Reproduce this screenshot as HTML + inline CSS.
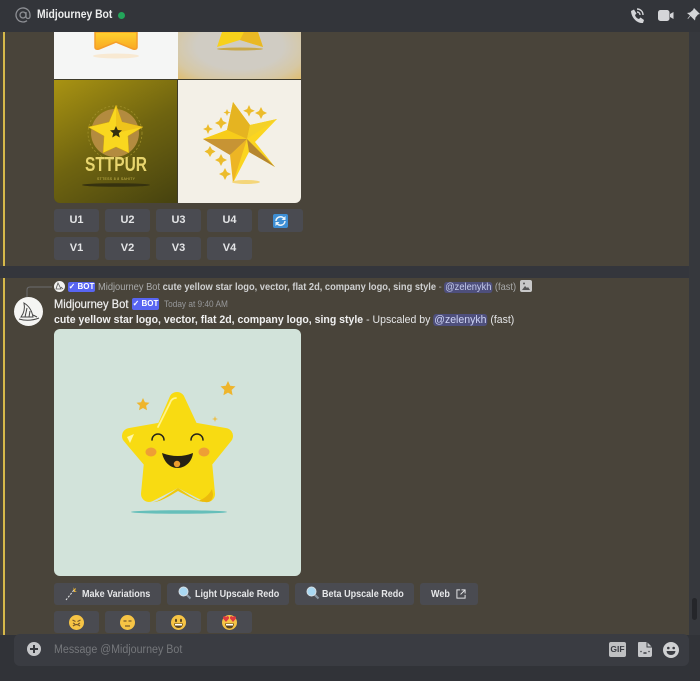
<!DOCTYPE html>
<html><head><meta charset="utf-8"><style>
html,body{margin:0;padding:0;background:#49443a}
#r{position:relative;width:700px;height:681px;overflow:hidden;background:#49443a;font-family:"Liberation Sans",sans-serif;color:#e6e7e9}
#r div,#r svg{position:absolute}
.b{background:#4a4b51;border-radius:3px;text-align:center;font-size:11px;font-weight:700;color:#e4e5e7;box-sizing:border-box;white-space:nowrap}
.u{width:45px;height:23px;line-height:23px}
.t{white-space:nowrap;transform-origin:0 50%}
.l{font-size:10.500px;font-weight:700;line-height:14px;color:#e6e7e9;top:587px;transform:scaleX(.86)}
.m{background:#4e4f7c;color:#cdd3f4;border-radius:3px;padding:0 1px}
</style></head><body><div id="r">
<div style="left:0;top:0;width:700px;height:32px;background:#33353a"></div>
<div style="left:689px;top:32px;width:11px;height:649px;background:#36383d"></div>
<div style="left:692px;top:598px;width:5px;height:22px;background:#25262a;border-radius:3px"></div>
<div style="left:0;top:266px;width:689px;height:12px;background:#34363c"></div>
<div style="left:3px;top:32px;width:2px;height:234px;background:#d6b94a"></div>
<div style="left:3px;top:278px;width:2px;height:357px;background:#d6b94a"></div>

<svg style="left:15px;top:7px" width="16" height="16" viewBox="0 0 16 16" fill="none" stroke="#8d8f94" stroke-width="1.300"><circle cx="8" cy="8" r="3"/><path d="M11 5v4.500a2 2 0 0 0 4 0V8a7 7 0 1 0-3 5.700"/></svg>
<div class="t" style="left:37px;top:8px;font-size:11.500px;font-weight:700;color:#eceded;line-height:15px;transform:scaleX(.9)">Midjourney Bot</div>
<div style="left:118px;top:12px;width:7px;height:7px;border-radius:50%;background:#23a55a"></div>

<svg style="left:629px;top:7px" width="17" height="18" viewBox="0 0 17 18"><path d="M2 4l3-1.500 2.500 4-1.500 1.500c.5 2 2 3.500 4 4l1.500-1.500 3.500 2.500-1 3c-6 .5-12-5.500-12-12.500z" fill="#d4d5d8"/><path d="M8 2c3.500 0 6 2.500 6 6M8 5c1.800 0 3 1.200 3 3" fill="none" stroke="#d4d5d8" stroke-width="1.400"/></svg>
<svg style="left:658px;top:9px" width="16" height="13" viewBox="0 0 16 13"><rect x="0" y="1" width="11.500" height="11" rx="2.500" fill="#d4d5d8"/><path d="M12 5l3.500-2v7L12 8z" fill="#d4d5d8"/></svg>
<svg style="left:687px;top:7px" width="13" height="16" viewBox="0 0 13 16"><path d="M7 1l6 6-2 .5-2.500 3-.5 3L3.500 9 1 12l-.5-.5L3 8.500 0 6l3-.5 3-2.500z" fill="#d4d5d8"/></svg>

<!-- image grid -->
<div style="left:54px;top:32px;width:247px;height:171px;border-radius:0 0 6px 6px;overflow:hidden;background:#3e3b2a">
<div style="left:0;top:0;width:124px;height:47px;background:#f5f6f5"></div>
<div style="left:124px;top:0;width:123px;height:47px;background:radial-gradient(ellipse at 50% 30%,#d0ccc3 50%,#d6c8a4 78%,#e3b95a 110%)"></div>
<div style="left:0;top:48px;width:123px;height:123px;background:linear-gradient(150deg,#a99312 0%,#6f6410 50%,#46420f 100%)"></div>
<div style="left:124px;top:48px;width:123px;height:123px;background:#f3f0e7"></div>
<svg style="left:0;top:0" width="247" height="171" viewBox="0 0 247 171">
<defs><linearGradient id="g" x1="0" x2="0" y1="0" y2="1"><stop offset="0" stop-color="#ffd22e"/><stop offset="1" stop-color="#f9a825"/></linearGradient></defs>
<path d="M41 0v15q0 3 4 2l17-7 17 7q4 1 4-2V0z" fill="url(#g)" stroke="#f59e2a" stroke-width="1.500"/>
<ellipse cx="62" cy="24" rx="23" ry="2.500" fill="#f8e9d2"/>
<path d="M168 0l-5 15 23-7 23 7-5-15z" fill="#f7d11b"/><path d="M186 8l23 7-5-15h-14z" fill="#e9b824"/>
<ellipse cx="186" cy="17" rx="23" ry="1.500" fill="#c9a94b"/>
<circle cx="61" cy="101" r="24" fill="#b38b3f"/>
<circle cx="61" cy="101" r="27" fill="none" stroke="#a0902a" stroke-width=".8" stroke-dasharray="2 2"/>
<path d="M62 73l6 17 21 5-15 9 1 17-13-6-13 6 1-17-16-9 21-5z" fill="#f9d71f" stroke="#c9a014" stroke-width=".5"/>
<path d="M62 73l6 17 21 5-27 6z" fill="#efc41b"/>
<path d="M62 94l1.800 4 4.200.4-3.200 2.800 1 4.300-3.800-2.200-3.800 2.200 1-4.300-3.200-2.800 4.200-.4z" fill="#33300f"/>
<text x="31" y="139" font-family="Liberation Sans" font-size="20" font-weight="700" fill="#e8d56e" textLength="62" lengthAdjust="spacingAndGlyphs">STTPUR</text>
<text x="43" y="148" font-family="Liberation Sans" font-size="3.500" fill="#cdbb50" textLength="38">STTESS 8 8 SAHITY</text>
<ellipse cx="62" cy="153" rx="34" ry="1.800" fill="#36320f"/>
<path d="M179 70l17 23 27-6-22 23 20 25-26-15-16 31-1-28-29-16 24-9z" fill="#fbd51f"/>
<path d="M179 70l17 23-3 14-20-9z" fill="#e5b421"/>
<path d="M149 107l24-9 20 9z" fill="#f7cc1a"/>
<path d="M149 107l44 0-17 16z" fill="#c79434"/>
<path d="M176 123l17-16-14 44z" fill="#edb524"/>
<path d="M193 107l28 28-26-15z" fill="#b68630"/>
<path d="M196 93l27-6-30 20z" fill="#f4d128"/>
<g fill="#ecbc2b">
<path d="M154 92l1.500 3.500 3.500 1.500-3.500 1.500-1.500 3.500-1.500-3.500-3.500-1.500 3.500-1.500z"/>
<path d="M167 85l2 4 4 2-4 2-2 4-2-4-4-2 4-2z"/>
<path d="M173 77l1 2.500 2.500 1-2.500 1-1 2.500-1-2.500-2.500-1 2.500-1z"/>
<path d="M195 73l1.800 4 4 1.800-4 1.800-1.800 4-1.800-4-4-1.800 4-1.800z"/>
<path d="M207 75l2 4 4 2-4 2-2 4-2-4-4-2 4-2z"/>
<path d="M156 114l2 3.500 3.500 2-3.500 2-2 3.500-2-3.500-3.500-2 3.500-2z"/>
<path d="M167 122l2 4 4 2-4 2-2 4-2-4-4-2 4-2z"/>
<path d="M171 136l2 4 4 2-4 2-2 4-2-4-4-2 4-2z"/>
</g>
<ellipse cx="192" cy="150" rx="14" ry="2" fill="#f4d67a"/>
</svg>
</div>

<div class="b u" style="left:54px;top:209px">U1</div><div class="b u" style="left:105px;top:209px">U2</div><div class="b u" style="left:156px;top:209px">U3</div><div class="b u" style="left:207px;top:209px">U4</div>
<div class="b u" style="left:258px;top:209px"></div>
<svg style="left:273px;top:214px" width="15" height="14" viewBox="0 0 15 14"><rect width="15" height="14" rx="2" fill="#3d8ed4"/><path d="M3 7a4.500 4.500 0 0 1 8-2.500M12 7a4.500 4.500 0 0 1-8 2.500" fill="none" stroke="#e8f1f8" stroke-width="1.500"/><path d="M12.500 2v4h-4zM2.500 12V8h4z" fill="#e8f1f8"/></svg>
<div class="b u" style="left:54px;top:237px">V1</div><div class="b u" style="left:105px;top:237px">V2</div><div class="b u" style="left:156px;top:237px">V3</div><div class="b u" style="left:207px;top:237px">V4</div>

<!-- reply -->
<svg style="left:26px;top:285px" width="28" height="14" viewBox="0 0 28 14" fill="none"><path d="M1 13V5q0-3 3-3h22" stroke="#6b6c6e" stroke-width="1"/></svg>
<div style="left:54px;top:281px;width:11px;height:11px;border-radius:50%;background:#f2f2f0"></div>
<svg style="left:55px;top:282px" width="9" height="9" viewBox="0 0 9 9"><path d="M3 1l3 6H1zM6 5l2 2" fill="none" stroke="#555" stroke-width=".8"/></svg>
<div class="t" style="left:68px;top:282px;width:27px;height:10px;background:#5865f2;border-radius:2px;font-size:8px;font-weight:700;line-height:10px;text-align:center;color:#fff">✓ BOT</div>
<div class="t" style="left:98px;top:280.500px;font-size:10.200px;line-height:13px;color:#a9aaab;transform:scaleX(.913)">Midjourney Bot <b style="color:#cfd0d1">cute yellow star logo, vector, flat 2d, company logo, sing style</b> - <span class="m" style="color:#c5cbec">@zelenykh</span> (fast)</div>
<svg style="left:520px;top:280px" width="12" height="12" viewBox="0 0 12 12"><rect width="12" height="12" rx="2" fill="#c8c8c8"/><path d="M2 10l3-4 2 2 1-1 2 3z" fill="#555"/><circle cx="4" cy="3.500" r="1" fill="#555"/></svg>

<!-- avatar -->
<div style="left:14px;top:297px;width:29px;height:29px;border-radius:50%;background:#f5f5f3"></div>
<svg style="left:17px;top:300px" width="24" height="23" viewBox="0 0 24 23" fill="none" stroke="#444" stroke-width="1"><path d="M7 3c5 3 8 8 9 14H4C7 13 8 8 7 3zM10 8l-2 9M13 11l-1 6M16 15l4 2M2 19q10 3 20-1"/></svg>

<div class="t" style="left:54px;top:296px;font-size:12px;line-height:16px;color:#f0f0f0;-webkit-text-stroke:.2px #f0f0f0;transform:scaleX(.93)">Midjourney Bot</div>
<div class="t" style="left:132px;top:298px;width:27px;height:12px;background:#5865f2;border-radius:2px;font-size:8px;font-weight:700;line-height:12px;text-align:center;color:#fff">✓ BOT</div>
<div class="t" style="left:164px;top:298px;font-size:8.800px;line-height:13px;color:#97989a;transform:scaleX(.94)">Today at 9:40 AM</div>
<div class="t" style="left:54px;top:312.500px;font-size:11.100px;line-height:15px;color:#e4e5e6;transform:scaleX(.948)"><b style="color:#f0f0f0">cute yellow star logo, vector, flat 2d, company logo, sing style</b> - Upscaled by <span class="m">@zelenykh</span> (fast)</div>

<!-- upscaled image -->
<div style="left:54px;top:329px;width:247px;height:247px;background:#d2e3da;border-radius:6px;overflow:hidden">
<svg style="left:0;top:0" width="247" height="247" viewBox="0 0 247 247">
<ellipse cx="125" cy="183" rx="48" ry="1.800" fill="#66bfba"/>
<path d="M174 52l2.200 4.800 5.300.6-3.900 3.600 1 5.200-4.600-2.600-4.600 2.600 1-5.200-3.900-3.600 5.300-.6z" fill="#eeb52c"/>
<path d="M89 69l1.900 4.200 4.600.5-3.400 3.100.9 4.500-4-2.300-4 2.300.9-4.500-3.400-3.100 4.600-.5z" fill="#eeb52c"/>
<path d="M161 87l.8 2.200 2.200.8-2.200.8-.8 2.200-.8-2.200-2.200-.8 2.200-.8z" fill="#ecc04b"/>
<polygon points="123,71 137,101 171,107 150,133 153,165 124,150 95,165 98,133 76,107 110,101" fill="#f8db12" stroke="#f8db12" stroke-width="16" stroke-linejoin="round"/>
<path d="M151 173c5 1 8-2 8-8l-1-5c-3 6-8 10-14 12z" fill="#ecbb0c"/>
<path d="M96 173c6 1 12-3 28-14 15 10 20 13 27 14-6 0-12-3-27-11-15 9-21 12-28 11z" fill="#efc80e"/>
<path d="M104 98l12-24c1-3 3-5 6-5" fill="none" stroke="#fff38c" stroke-width="1.800" stroke-linecap="round"/>
<path d="M73 108l7-3-4 9z" fill="#fff7a8"/>
<path d="M98 111a6 6 0 0 1 12 0M137 111a6 6 0 0 1 12 0" stroke="#25241a" stroke-width="1.500" fill="none" stroke-linecap="round"/>
<ellipse cx="97" cy="123" rx="5.500" ry="4.500" fill="#ee9f35"/><ellipse cx="150" cy="123" rx="5.500" ry="4.500" fill="#ee9f35"/>
<path d="M108 124q16 6 31 0c-1 9-8 15-15.500 15S110 133 108 124z" fill="#262214"/>
<circle cx="123" cy="135" r="3.200" fill="#ec9d2e"/>
</svg>
</div>

<div class="b" style="left:54px;top:583px;width:107px;height:22px"></div>
<div class="t l" style="left:82px">Make Variations</div>
<svg style="left:65px;top:585px" width="14" height="16" viewBox="0 0 14 16"><path d="M1 15l8-10" stroke="#eee" stroke-width="1" stroke-dasharray="2 1.500"/><path d="M8 2l1 2 2-1-1 3 2 1-3 0" fill="#e3b23a"/></svg>
<div class="b" style="left:167px;top:583px;width:122px;height:22px"></div>
<div class="t l" style="left:195px">Light Upscale Redo</div>
<div class="b" style="left:295px;top:583px;width:119px;height:22px"></div>
<div class="t l" style="left:322px">Beta Upscale Redo</div>
<svg style="left:178px;top:586px" width="14" height="14" viewBox="0 0 14 14"><path d="M8.500 8.500l4 4" stroke="#8a97a3" stroke-width="2"/><circle cx="5.500" cy="5.500" r="4.500" fill="#a9d8f2" stroke="#d5dde3"/></svg>
<svg style="left:306px;top:586px" width="14" height="14" viewBox="0 0 14 14"><path d="M8.500 8.500l4 4" stroke="#8a97a3" stroke-width="2"/><circle cx="5.500" cy="5.500" r="4.500" fill="#a9d8f2" stroke="#d5dde3"/></svg>
<div class="b" style="left:420px;top:583px;width:58px;height:22px"></div>
<div class="t l" style="left:431px">Web</div>
<svg style="left:456px;top:589px" width="10" height="10" viewBox="0 0 11 11" fill="none" stroke="#e2e3e5" stroke-width="1.100"><path d="M4.500 1H1v9h9V6.500M6 1h4v4M10 1L5 6"/></svg>

<div class="b u" style="left:54px;top:611px;height:22px"></div><div class="b u" style="left:105px;top:611px;height:22px"></div><div class="b u" style="left:156px;top:611px;height:22px"></div><div class="b u" style="left:207px;top:611px;height:22px"></div>
<svg style="left:69px;top:615px" width="15" height="15" viewBox="0 0 15 15"><circle cx="7.500" cy="7.500" r="7.500" fill="#f6c445"/><path d="M3.500 5l3 1.500M11.500 5l-3 1.500M4 11q3.500-3 7 0" stroke="#7a5a2a" stroke-width="1.200" fill="none"/><path d="M4 8l2 1M11 8L9 9" stroke="#7a5a2a"/></svg>
<svg style="left:120px;top:615px" width="15" height="15" viewBox="0 0 15 15"><circle cx="7.500" cy="7.500" r="7.500" fill="#f6c445"/><path d="M3.500 6h3M8.500 6h3M5 11h5" stroke="#7a5a2a" stroke-width="1.200" fill="none"/></svg>
<svg style="left:171px;top:615px" width="15" height="15" viewBox="0 0 15 15"><circle cx="7.500" cy="7.500" r="7.500" fill="#f6c445"/><ellipse cx="5" cy="5.500" rx="1" ry="1.700" fill="#5a4520"/><ellipse cx="10" cy="5.500" rx="1" ry="1.700" fill="#5a4520"/><path d="M3 8.500h9q-.5 4.500-4.500 4.500T3 8.500z" fill="#5a4520"/><path d="M4 9h7v1.500H4z" fill="#fff"/></svg>
<svg style="left:222px;top:615px" width="15" height="15" viewBox="0 0 15 15"><circle cx="7.500" cy="7.500" r="7.500" fill="#f6c445"/><path d="M3 8.500h9q-.5 5-4.500 5T3 8.500z" fill="#5a4520"/><path d="M4 9h7v1.500H4z" fill="#fff"/><path d="M4 7L1.200 3.800C.4 2.500 1.500.8 3 1.200L4 2l1-.8c1.500-.4 2.600 1.300 1.800 2.600zM11 7L8.200 3.800C7.400 2.500 8.500.8 10 1.200l1 .8 1-.8c1.500-.4 2.600 1.300 1.800 2.600z" fill="#dd3b40"/></svg>

<!-- input -->
<div style="left:0;top:635px;width:700px;height:46px;background:#313338"></div>
<div style="left:14px;top:634px;width:675px;height:32px;background:#3a3c42;border-radius:6px"></div>
<div style="left:27px;top:642px;width:14px;height:14px;border-radius:50%;background:#c6c7ca"></div>
<div style="left:30px;top:648px;width:8px;height:2px;background:#36383d"></div>
<div style="left:33px;top:645px;width:2px;height:8px;background:#36383d"></div>
<div class="t" style="left:54px;top:642.500px;font-size:11.500px;line-height:15px;color:#75777b;transform:scaleX(.928)">Message @Midjourney Bot</div>
<div style="left:609px;top:642px;width:17px;height:15px;background:#bfc0c2;border-radius:2px;color:#3a3c42;font-size:8.500px;font-weight:700;line-height:15px;text-align:center">GIF</div>
<svg style="left:637px;top:642px" width="16" height="15" viewBox="0 0 16 15"><path d="M2 0h8l5 5v8q0 2-2 2H2q-1 0-1-2V1q0-1 1-1z" fill="#c6c7ca"/><path d="M10 0v5h5" fill="none" stroke="#3a3c42"/><path d="M4 9.500h.01M7 11h2M12 9.500h.01" stroke="#3a3c42" stroke-width="1.500" stroke-linecap="round"/></svg>
<svg style="left:663px;top:642px" width="16" height="16" viewBox="0 0 16 16"><circle cx="8" cy="8" r="8" fill="#d0d1d3"/><circle cx="5.300" cy="6" r="1.300" fill="#3a3c42"/><circle cx="10.700" cy="6" r="1.300" fill="#3a3c42"/><path d="M3.500 9h9q-.5 4-4.500 4T3.500 9z" fill="#3a3c42"/></svg>
</div></body></html>
